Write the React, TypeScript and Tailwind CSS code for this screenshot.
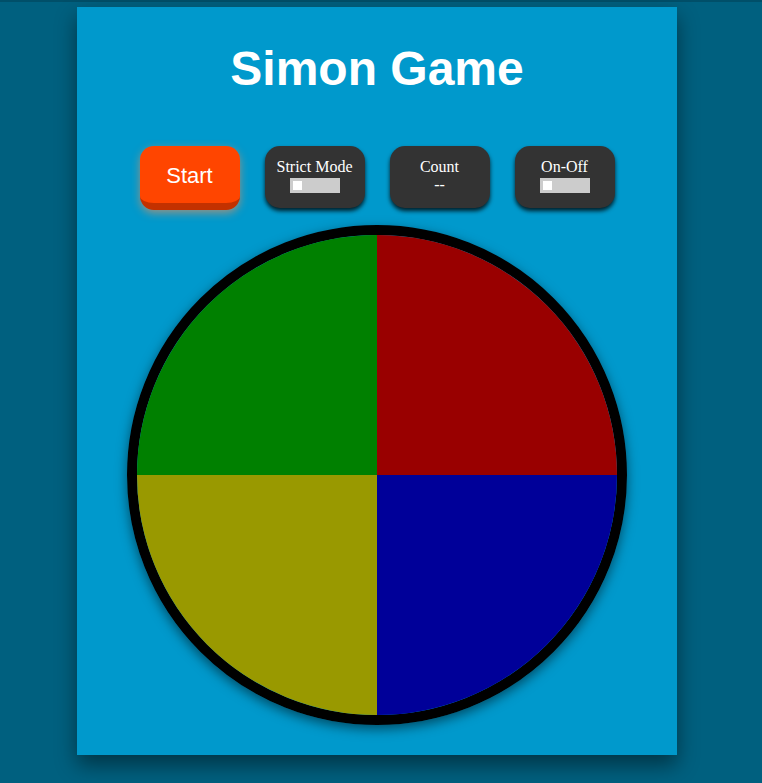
import React from 'react';

function Toggle() {
  return (
    <div className="mx-auto mt-[2px] h-[15px] w-[50px] bg-[#cccccc] p-[3px]">
      <div className="h-[9px] w-[9px] bg-white" />
    </div>
  );
}

const box =
  "h-[62px] w-[100px] rounded-[15px] bg-[#333333] pt-[12px] text-center font-['Liberation_Serif',serif] text-[16px] leading-[18px] text-white shadow-[0_3px_4px_rgba(0,0,0,0.8)]";

export default function App() {
  return (
    <div className="min-h-[783px] border-t-2 border-[#004f69] bg-[#00607f] pt-[5px] font-['Liberation_Sans',Arial,sans-serif]">
      <div className="mx-auto h-[748px] w-[600px] -translate-x-[4px] bg-[#0099cc] pt-[38px] shadow-[0_10px_20px_rgba(0,0,0,0.45)]">
        <h1 className="text-center text-[48px] font-bold leading-[48px] text-white">Simon Game</h1>
        <div className="mt-[53px] flex justify-center gap-[25px]">
          <button className="h-[64px] w-[100px] rounded-[14px] border-b-[7px] border-[#c33100] bg-[#ff4500] pt-[2px] text-[22px] text-white shadow-[0_3px_8px_rgba(255,140,80,0.6)]">
            Start
          </button>
          <div className={box}>
            Strict Mode
            <Toggle />
          </div>
          <div className={box}>
            Count
            <div>--</div>
          </div>
          <div className={box}>
            On-Off
            <Toggle />
          </div>
        </div>
        <div className="mx-auto mt-[15px] grid h-[500px] w-[500px] grid-cols-2 grid-rows-2 overflow-hidden rounded-full border-[10px] border-black shadow-[0_4px_12px_rgba(0,0,0,0.5)]">
          <div className="bg-[#008000]" />
          <div className="bg-[#990000]" />
          <div className="bg-[#999900]" />
          <div className="bg-[#000099]" />
        </div>
      </div>
    </div>
  );
}
